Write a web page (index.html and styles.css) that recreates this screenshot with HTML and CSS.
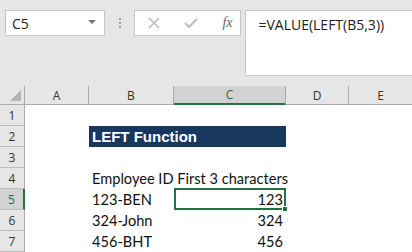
FILE: index.html
```html
<!DOCTYPE html>
<html lang="en">
<head>
    <meta charset="UTF-8">
    <title>LEFT Function</title>
    <link rel="stylesheet" href="styles.css">
</head>
<body>
    <div class="formula-bar">
        <div class="name-box">
            <span>C5</span>
            <span class="arrow"></span>
        </div>
        <div class="dots">
            <span></span><span></span><span></span>
        </div>
        <div class="buttons">
            <svg class="icon" width="12" height="12" viewBox="0 0 12 12">
                <path d="M1 1 L11 11 M11 1 L1 11" stroke="#bdbdbd" stroke-width="1.6" fill="none"/>
            </svg>
            <svg class="icon" width="14" height="12" viewBox="0 0 14 12">
                <path d="M1 6 L5 10 L13 2" stroke="#bdbdbd" stroke-width="2" fill="none"/>
            </svg>
            <span class="fx">fx</span>
        </div>
        <div class="formula">=VALUE(LEFT(B5,3))</div>
    </div>

    <div class="sheet">
        <div class="corner"><span class="tri"></span></div>
        <div class="col-head">A</div>
        <div class="col-head">B</div>
        <div class="col-head active">C</div>
        <div class="col-head">D</div>
        <div class="col-head last">E</div>

        <div class="row-head">1</div>
        <div class="cell"></div><div class="cell"></div><div class="cell"></div><div class="cell"></div><div class="cell"></div>

        <div class="row-head">2</div>
        <div class="cell"></div>
        <div class="cell title span2">LEFT Function</div>
        <div class="cell"></div><div class="cell"></div>

        <div class="row-head">3</div>
        <div class="cell"></div><div class="cell"></div><div class="cell"></div><div class="cell"></div><div class="cell"></div>

        <div class="row-head">4</div>
        <div class="cell"></div>
        <div class="cell overflow">Employee ID First 3 characters</div>
        <div class="cell"></div><div class="cell"></div><div class="cell"></div>

        <div class="row-head active">5</div>
        <div class="cell"></div>
        <div class="cell">123-BEN</div>
        <div class="cell num selected">123<span class="handle"></span></div>
        <div class="cell"></div><div class="cell"></div>

        <div class="row-head">6</div>
        <div class="cell"></div>
        <div class="cell">324-John</div>
        <div class="cell num">324</div>
        <div class="cell"></div><div class="cell"></div>

        <div class="row-head">7</div>
        <div class="cell"></div>
        <div class="cell">456-BHT</div>
        <div class="cell num">456</div>
        <div class="cell"></div><div class="cell"></div>
    </div>
</body>
</html>
```

FILE: styles.css
```css
* {
    margin: 0;
    padding: 0;
    box-sizing: border-box;
}
body {
    width: 412px;
    height: 252px;
    overflow: hidden;
    background: #ffffff;
    font-family: "Open Sans", Arial, sans-serif;
}
.formula-bar {
    height: 86px;
    background: #e6e6e6;
    display: flex;
    align-items: flex-start;
    padding: 10px 0 0 5px;
}
.name-box {
    width: 102px;
    height: 26px;
    background: #ffffff;
    border: 1px solid #c6c6c6;
    display: flex;
    align-items: center;
    justify-content: space-between;
    padding: 0 8px 0 6px;
    font-size: 14px;
    color: #222222;
}
.arrow {
    width: 0;
    height: 0;
    border-left: 4px solid transparent;
    border-right: 4px solid transparent;
    border-top: 4px solid #777777;
    margin-top: -2px;
}
.dots {
    width: 30px;
    height: 26px;
    display: flex;
    flex-direction: column;
    align-items: center;
    justify-content: center;
    gap: 2px;
}
.dots span {
    width: 2px;
    height: 2px;
    background: #a0a0a0;
}
.buttons {
    width: 109px;
    height: 26px;
    background: #ffffff;
    border: 1px solid #c6c6c6;
    display: flex;
    align-items: center;
    padding-left: 13px;
    gap: 24px;
}
.fx {
    font-family: "Liberation Serif", serif;
    font-style: italic;
    font-size: 14px;
    color: #666666;
}
.formula {
    width: 170px;
    height: 66px;
    margin-left: 4px;
    background: #ffffff;
    border: 1px solid #c6c6c6;
    border-right: none;
    padding: 4px 0 0 12px;
    font-size: 14px;
    color: #222222;
}
.sheet {
    display: grid;
    grid-template-columns: 25px 64px 85px 112px 63px 63px;
    grid-template-rows: 19px repeat(7, 21px);
    font-family: "Lato", "Liberation Sans", sans-serif;
}
.corner {
    background: #e6e6e6;
    border-right: 1px solid #ababab;
    border-bottom: 1px solid #ababab;
    position: relative;
}
.tri {
    position: absolute;
    right: 3px;
    bottom: 3px;
    width: 0;
    height: 0;
    border-left: 11px solid transparent;
    border-bottom: 11px solid #b4b4b4;
}
.col-head {
    background: #e6e6e6;
    border-right: 1px solid #ababab;
    border-bottom: 1px solid #ababab;
    font-family: "Open Sans", sans-serif;
    font-size: 12px;
    color: #333333;
    display: flex;
    align-items: center;
    justify-content: center;
}
.col-head.last {
    border-right: none;
}
.col-head.active {
    background: #d2d2d2;
    color: #217346;
    border-bottom: 2px solid #217346;
}
.row-head {
    background: #e6e6e6;
    border-right: 1px solid #ababab;
    border-bottom: 1px solid #bdbdbd;
    font-family: "Open Sans", sans-serif;
    font-size: 12px;
    color: #333333;
    display: flex;
    align-items: center;
    justify-content: center;
}
.row-head.active {
    background: #d2d2d2;
    color: #217346;
    border-right: 2px solid #217346;
}
.cell {
    font-size: 14.6px;
    color: #111111;
    display: flex;
    align-items: center;
    padding: 0 3px;
    white-space: nowrap;
    position: relative;
}
.cell.overflow {
    overflow: visible;
    z-index: 1;
}
.cell.title {
    background: #17375e;
    color: #ffffff;
    font-weight: bold;
    font-family: "Liberation Sans", Arial, sans-serif;
    font-size: 15px;
}
.span2 {
    grid-column: span 2;
}
.cell.num {
    justify-content: flex-end;
}
.cell.selected {
    border: 2px solid #217346;
    margin-top: -1px;
    padding-right: 1px;
}
.handle {
    position: absolute;
    right: -4px;
    bottom: -4px;
    width: 6px;
    height: 6px;
    background: #217346;
    border: 1px solid #ffffff;
}
```
